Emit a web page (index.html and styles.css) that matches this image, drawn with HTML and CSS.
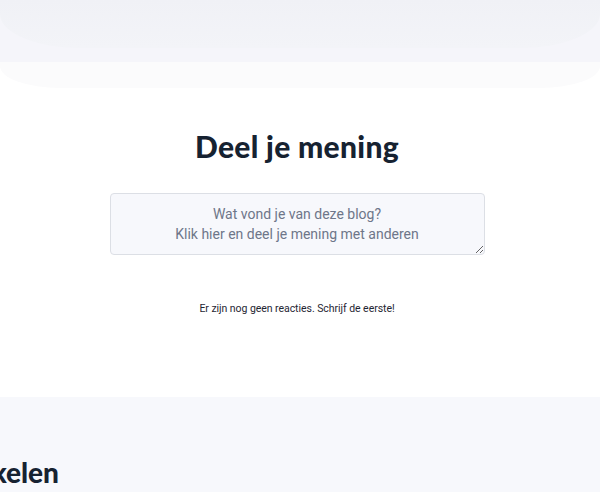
FILE: index.html
```html
<!DOCTYPE html>
<html lang="nl">
<head>
<meta charset="utf-8">
<link rel="stylesheet" href="styles.css">
</head>
<body>
<div class="top-band"><div class="top-inner"></div></div>
<div class="top-fade"></div>
<section class="comments">
  <h2 class="comments-title">Deel je mening</h2>
  <textarea class="comment-box" placeholder="Wat vond je van deze blog?&#10;Klik hier en deel je mening met anderen"></textarea>
  <p class="empty">Er zijn nog geen reacties. Schrijf de eerste!</p>
</section>
<section class="related">
  <div class="related-clip"><h2 class="related-title">Gerelateerde artikelen</h2></div>
</section>
</body>
</html>
```
FILE: styles.css
```css
html, body { margin: 0; padding: 0; background: #ffffff; }
body { width: 600px; height: 492px; overflow: hidden; font-family: "Inter", "Liberation Sans", sans-serif; display: flex; flex-direction: column; }
.top-band {
  height: 62px;
  flex: none;
  background: #f5f5fa;
}
.top-inner {
  height: 48px;
  background: linear-gradient(#f0f1f6, #f3f4f8);
  border-radius: 0 0 80px 80px / 0 0 34px 34px;
}
.top-fade {
  height: 26px;
  flex: none;
  background: #fbfbfc;
  border-radius: 0 0 60px 60px / 0 0 22px 22px;
}
.comments {
  display: flex;
  flex-direction: column;
  align-items: center;
  padding: 40px 6px 0 0;
  height: 309px;
  flex: none;
  box-sizing: border-box;
}
.comments-title {
  margin: 0;
  font-family: "Lato", sans-serif;
  font-weight: 900;
  font-size: 30px;
  line-height: 36px;
  color: #162231;
  letter-spacing: 0.3px;
}
.comment-box {
  margin-top: 29px;
  width: 375px;
  height: 62px;
  box-sizing: border-box;
  background: #f7f8fc;
  border: 1px solid #dcdfe5;
  border-radius: 4px;
  padding: 10px 12px;
  font-family: "Roboto", sans-serif;
  font-size: 14px;
  line-height: 20px;
  text-align: center;
  resize: vertical;
  color: #1f2937;
}
.comment-box::placeholder { color: #6e7689; }
.empty {
  margin: 47px 0 0;
  font-family: "Roboto", sans-serif;
  font-size: 10.5px;
  line-height: 14px;
  color: #1f2633;
  letter-spacing: -0.05px;
}
.related {
  background: #f7f8fc;
  flex: 1;
  padding-top: 58px;
  box-sizing: border-box;
}
.related-clip {
  width: 59px;
  overflow: hidden;
  display: flex;
  justify-content: flex-end;
}
.related-title {
  margin: 0;
  white-space: nowrap;
  font-family: "Lato", sans-serif;
  font-weight: 900;
  font-size: 28px;
  line-height: 34px;
  color: #162231;
}
```
